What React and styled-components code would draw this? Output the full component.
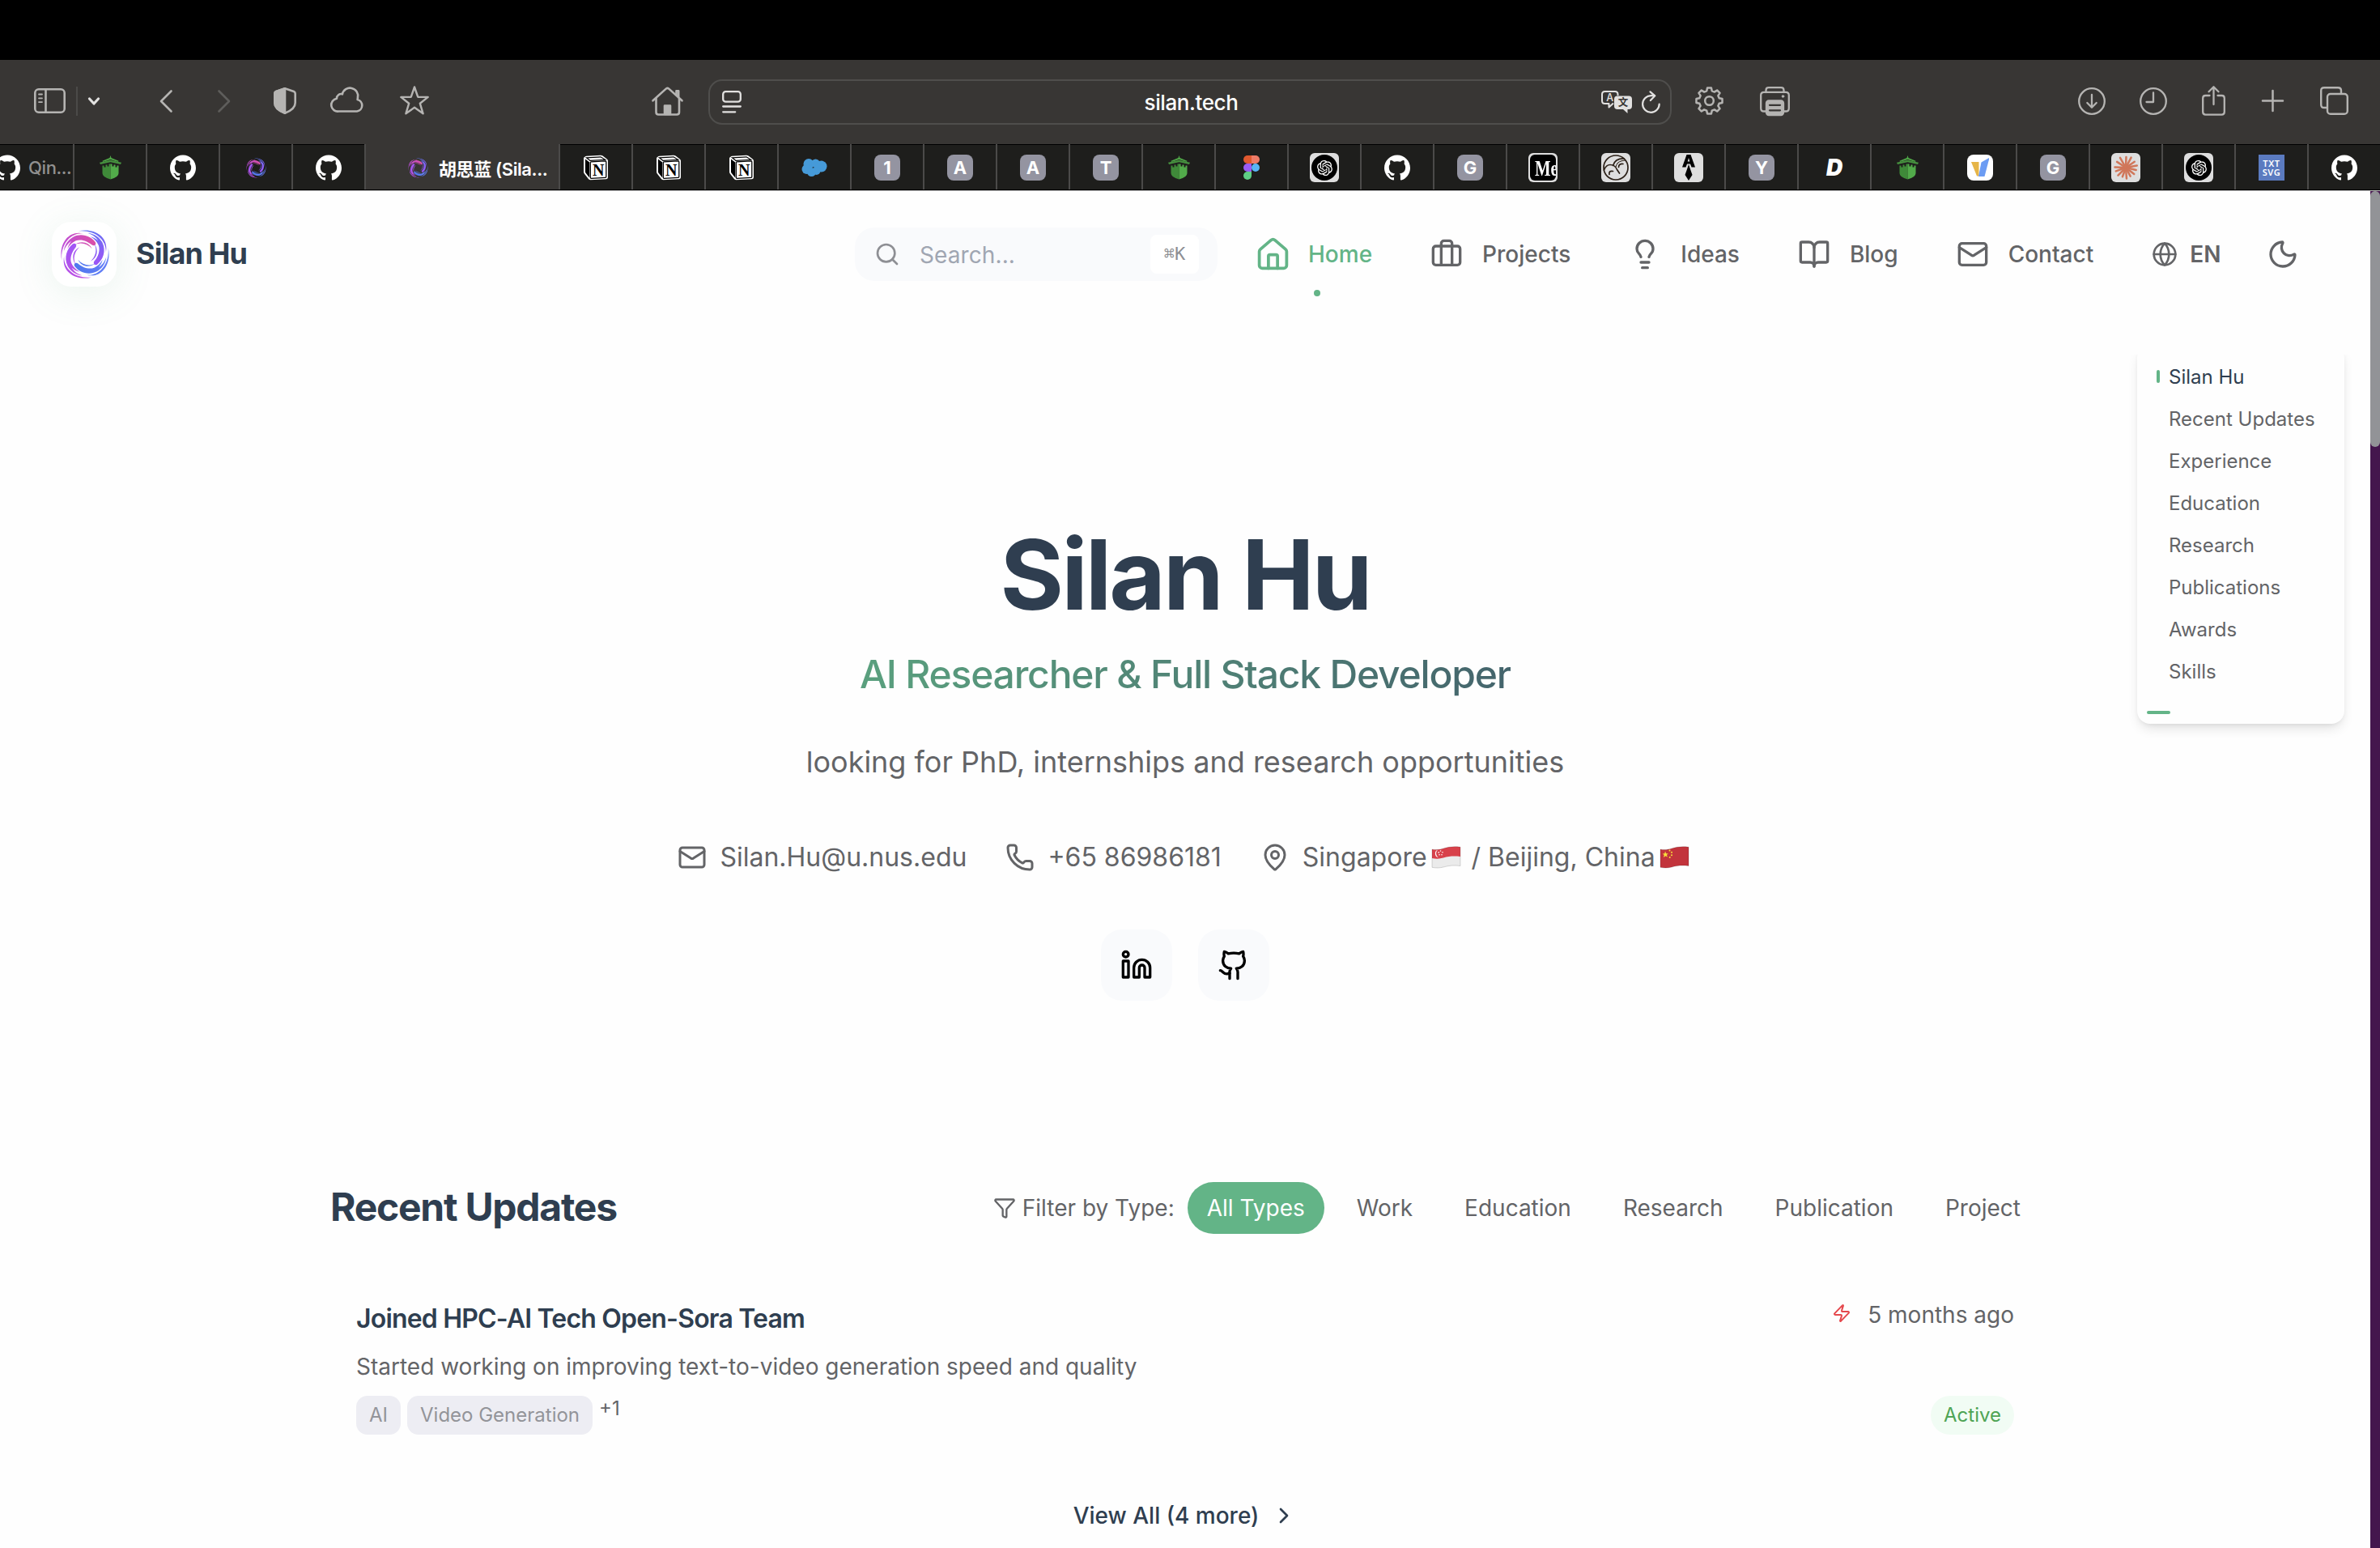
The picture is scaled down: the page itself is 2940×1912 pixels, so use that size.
import React from "react";
import styled, { createGlobalStyle, css } from "styled-components";
import {
  House, Briefcase, Lightbulb, BookOpen, Mail, Globe, Moon, Search,
  Phone, MapPin, Linkedin, Github, Funnel, Zap, ChevronRight,
} from "lucide-react";
import { SiGithub } from "react-icons/si";
import { RiOpenaiFill } from "react-icons/ri";

const ink = "#2f3e50";
const muted = "#636467";
const green = "#63b487";
const chrome = "#383634";
const glyph = "#b5b4b2";

const GlobalStyle = createGlobalStyle`
  *, *::before, *::after { box-sizing: border-box; }
  body {
    margin: 0;
    background: #000;
    font-family: Inter, "Noto Sans CJK SC", sans-serif;
    overflow: hidden;
  }
  h1, h2, h3, p { margin: 0; }
  svg { display: block; flex: none; }
`;

const Screen = styled.div`
  width: 2940px;
  height: 1912px;
  display: flex;
  flex-direction: column;
  padding-top: 74px;
  overflow: hidden;
`;

/* ---------- browser chrome ---------- */

const Toolbar = styled.div`
  height: 104px;
  flex: none;
  display: flex;
  align-items: center;
  background: ${chrome};
  padding: 0 39px 3px 42px;
`;

const ToolButton = styled.div`
  flex: none;
  display: flex;
  align-items: center;
  height: 44px;
  padding-bottom: ${(p) => p.$lift || 0}px;
  margin-left: ${(p) => p.$gap || 0}px;
  color: ${(p) => p.$color || glyph};
`;

const ToolDivider = styled.div`
  width: 2px;
  height: 36px;
  margin-left: 13px;
  background: #4b4a48;
`;

const Spacer = styled.div`
  flex: 1;
`;

const UrlBar = styled.div`
  width: 1190px;
  height: 56px;
  margin-top: 3px;
  margin-left: 31px;
  padding: 0 12px 0 15px;
  border: 2px solid #4f4e4c;
  border-radius: 17px;
  display: flex;
  align-items: center;
  justify-content: space-between;
  color: #e2e1e0;
`;

const UrlSide = styled.div`
  width: 80px;
  display: flex;
  align-items: center;
  gap: 12px;
  justify-content: ${(p) => (p.$end ? "flex-end" : "flex-start")};
`;

const UrlText = styled.div`
  padding-top: 1px;
  font-size: 26px;
  font-weight: 500;
  letter-spacing: -0.4px;
  color: #fff;
`;

const TabStrip = styled.div`
  height: 58px;
  flex: none;
  display: flex;
  background: #1e1e1c;
  border-bottom: 1px solid #b9b9b9;
  box-shadow: inset 0 -1px 0 #000;
`;

const Tab = styled.div`
  flex: none;
  width: ${(p) => p.$width || 90}px;
  height: 56px;
  display: flex;
  align-items: center;
  justify-content: ${(p) => (p.$start ? "flex-start" : "center")};
  padding-top: 2px;
  padding-left: ${(p) => p.$start || 0}px;
  gap: ${(p) => p.$gap || 0}px;
  border-right: 2px solid #4b4a49;
  overflow: hidden;
  white-space: nowrap;
  ${(p) =>
    p.$active
      ? css`background: ${chrome};`
      : css`box-shadow: inset 0 1px 0 #000;`}
`;

const TabTitle = styled.span`
  font-size: 22px;
  font-weight: ${(p) => (p.$active ? 600 : 500)};
  letter-spacing: -0.4px;
  color: ${(p) => (p.$active ? "#fff" : "#91908f")};
`;

const LetterIcon = styled.div`
  width: 32px;
  height: 32px;
  border-radius: 8px;
  background: #9494a1;
  color: #fff;
  font-size: 22px;
  font-weight: 700;
  line-height: 33px;
  text-align: center;
`;

const PlateIcon = styled.div`
  width: 36px;
  height: 36px;
  border-radius: 6px;
  background: #dedede;
  display: flex;
  align-items: center;
  justify-content: center;
`;

const Disc = styled.div`
  width: 32px;
  height: 32px;
  border-radius: 16px;
  background: #000;
  color: #fff;
  display: flex;
  align-items: center;
  justify-content: center;
`;

const SerifPlate = styled.div`
  width: 32px;
  height: 32px;
  border-radius: 6px;
  background: #000;
  color: #fff;
  overflow: hidden;
  padding-left: 6px;
  font: 700 28px/33px "Liberation Serif", serif;

  span {
    display: block;
    transform: scaleX(0.74);
    transform-origin: left center;
  }
`;

const SlantLetter = styled.div`
  color: #fff;
  font-size: 28px;
  font-weight: 900;
  font-style: italic;
`;

const TxtTile = styled.div`
  width: 32px;
  height: 32px;
  background: #5b7bc0;
  color: #fff;
  padding-top: 5px;
  font: 600 11px/11px "Noto Sans", sans-serif;
  letter-spacing: 0.6px;
  text-align: center;
`;

/* ---------- page ---------- */

const Viewport = styled.div`
  flex: 1;
  min-height: 0;
  display: flex;
  background: #fefefe;
`;

const Page = styled.div`
  flex: 1;
  min-width: 0;
  position: relative;
  display: flex;
  flex-direction: column;
`;

const ScrollTrack = styled.div`
  width: 12px;
  background: #44164d;
`;

const ScrollThumb = styled.div`
  height: 316px;
  border-radius: 6px;
  background: #929397;
`;

const Header = styled.header`
  height: 156px;
  flex: none;
  display: flex;
  align-items: center;
  padding-left: 64px;
`;

const LogoBox = styled.div`
  width: 80px;
  height: 80px;
  border-radius: 24px;
  background: #fff;
  display: flex;
  align-items: center;
  justify-content: center;
  padding-left: 1px;
  box-shadow: 0 8px 48px rgba(99, 180, 135, 0.13);
`;

const Brand = styled.div`
  width: 890px;
  padding-left: 24px;
  padding-bottom: 2px;
  font-size: 36px;
  font-weight: 700;
  letter-spacing: -0.9px;
  color: ${ink};
`;

const SearchBox = styled.div`
  width: 448px;
  height: 66px;
  margin-left: 22px;
  padding: 0 23px 0 24px;
  border-radius: 24px;
  background: #f9fafc;
  display: flex;
  align-items: center;
  color: #8e8f94;
`;

const Placeholder = styled.span`
  flex: 1;
  padding-top: 1px;
  padding-left: 24px;
  font-size: 28px;
  letter-spacing: 0.1px;
  color: #a0a6b2;
`;

const Kbd = styled.span`
  width: 60px;
  height: 48px;
  border-radius: 8px;
  background: #fff;
  display: flex;
  align-items: center;
  justify-content: center;
  font: 22px/48px "DejaVu Sans Mono", "DejaVu Sans", monospace;
  color: #8e8f94;
`;

const NavItem = styled.a`
  position: relative;
  flex: none;
  display: flex;
  align-items: center;
  gap: ${(p) => p.$iconGap ?? 24}px;
  margin-left: ${(p) => p.$gap ?? 72}px;
  font-size: 28px;
  font-weight: ${(p) => p.$weight || 500};
  color: ${(p) => (p.$active ? green : muted)};
`;

const NavIcon = styled.span`
  width: 40px;
  display: flex;
  justify-content: center;
`;

const ActiveDot = styled.span`
  position: absolute;
  left: 71px;
  top: 66px;
  width: 8px;
  height: 8px;
  border-radius: 4px;
  background: ${green};
`;

const Hero = styled.section`
  display: flex;
  flex-direction: column;
  align-items: center;
  padding-top: 246px;
`;

const Name = styled.h1`
  font-size: 120px;
  line-height: 144px;
  font-weight: 700;
  letter-spacing: -3px;
  color: ${ink};
`;

const Role = styled.h2`
  margin-top: 21px;
  font-size: 48px;
  line-height: 60px;
  font-weight: 500;
  letter-spacing: -1.2px;
  background: linear-gradient(90deg, #5aa07e, #538a78 40%, #44646c);
  background-clip: text;
  -webkit-background-clip: text;
  color: transparent;
`;

const Tagline = styled.p`
  margin-top: 48px;
  font-size: 36px;
  line-height: 60px;
  color: ${muted};
`;

const ContactRow = styled.div`
  margin-top: 64px;
  height: 48px;
  display: flex;
  align-items: center;
  gap: 48px;
`;

const ContactItem = styled.div`
  display: flex;
  align-items: center;
  gap: 16px;
  font-size: 32px;
  line-height: 48px;
  color: ${muted};
  white-space: pre;
`;

const ContactText = styled.span`
  display: flex;
  align-items: center;

  svg {
    margin: 0 4px 0 5px;
  }
`;

const SocialRow = styled.div`
  margin-top: 65px;
  display: flex;
  gap: 32px;
`;

const SocialButton = styled.a`
  width: 88px;
  height: 88px;
  border-radius: 26px;
  background: #f9fafc;
  color: #000;
  display: flex;
  align-items: center;
  justify-content: center;
`;

const Updates = styled.section`
  width: 2112px;
  margin: 224px auto 0;
`;

const UpdatesHead = styled.div`
  height: 64px;
  display: flex;
  align-items: center;
  gap: 16px;
`;

const SectionTitle = styled.h2`
  flex: 1;
  padding-bottom: 2px;
  font-size: 48px;
  line-height: 60px;
  font-weight: 700;
  letter-spacing: -1.25px;
  color: ${ink};
`;

const FilterLabel = styled.div`
  display: flex;
  align-items: center;
  gap: 8px;
  font-size: 28px;
  color: ${muted};
`;

const Pill = styled.button`
  height: 64px;
  padding: 0 24px;
  border: 0;
  border-radius: 32px;
  font: 400 28px/64px Inter, sans-serif;
  background: ${(p) => (p.$active ? green : "transparent")};
  color: ${(p) => (p.$active ? "#fff" : muted)};
`;

const Card = styled.article`
  margin-top: 82px;
  padding: 0 32px;
  display: flex;
  justify-content: space-between;
`;

const CardMain = styled.div`
  display: flex;
  flex-direction: column;
`;

const CardTitle = styled.h3`
  margin-top: 1px;
  font-size: 32px;
  line-height: 44px;
  font-weight: 600;
  letter-spacing: -0.82px;
  color: ${ink};
`;

const CardText = styled.p`
  margin-top: 15px;
  font-size: 28px;
  line-height: 44px;
  color: ${muted};
`;

const Tags = styled.div`
  margin-top: 14px;
  display: flex;
  gap: 8px;
`;

const Tag = styled.span`
  height: 48px;
  padding: 0 16px;
  border-radius: 14px;
  background: #ededf3;
  font-size: 24px;
  line-height: 48px;
  color: #939499;
`;

const MoreTags = styled.span`
  font-size: 24px;
  line-height: 32px;
  color: ${muted};
`;

const CardSide = styled.div`
  display: flex;
  flex-direction: column;
  align-items: flex-end;
  justify-content: space-between;
`;

const When = styled.div`
  display: flex;
  align-items: center;
  gap: 20px;
  height: 36px;
  font-size: 28px;
  color: ${muted};

  svg {
    margin-bottom: 4px;
  }
`;

const Status = styled.span`
  height: 48px;
  padding: 0 16px;
  border-radius: 24px;
  background: #f1fcf4;
  font-size: 24px;
  line-height: 48px;
  color: #4fa455;
`;

const ViewAll = styled.div`
  margin-top: 78px;
  height: 44px;
  display: flex;
  align-items: center;
  justify-content: center;
  gap: 15px;
  font-size: 28px;
  font-weight: 500;
  color: ${ink};
`;

const Toc = styled.nav`
  position: absolute;
  left: 2640px;
  top: 190px;
  width: 256px;
  height: 468px;
  padding: 13px 12px 0;
  border-radius: 16px;
  background: #fefefe;
  box-shadow: 0 8px 16px -4px rgba(0, 0, 0, 0.14), 0 2px 6px -2px rgba(0, 0, 0, 0.08);
  clip-path: inset(12px -30px -40px -30px);
  display: flex;
  flex-direction: column;
`;

const TocItem = styled.a`
  height: 52px;
  display: flex;
  align-items: center;
  padding-left: 12px;
  gap: 11px;
  font-size: 24px;
  white-space: nowrap;
  color: ${(p) => (p.$active ? ink : muted)};

  &::before {
    content: "";
    flex: none;
    width: 4px;
    height: 16px;
    border-radius: 2px;
    background: ${(p) => (p.$active ? green : "transparent")};
  }
`;

const TocProgress = styled.div`
  width: 29px;
  height: 4px;
  margin-top: 23px;
  border-radius: 2px;
  background: ${green};
`;

/* ---------- drawings ---------- */

const Line = ({ w, h, sw = 2.6, children }) => (
  <svg width={w} height={h} viewBox={`0 0 ${w} ${h}`} fill="none" stroke="currentColor"
    strokeWidth={sw} strokeLinecap="round" strokeLinejoin="round" overflow="visible">
    {children}
  </svg>
);

const SidebarIcon = () => (
  <Line w={39} h={31}>
    <rect x="1.3" y="1.3" width="36.4" height="28.4" rx="4.5" />
    <path d="M14.5 1.5v28" />
    <path d="M6 7.5h4M6 12.3h4M6 17.1h4" strokeWidth="1.8" />
  </Line>
);

const ShieldIcon = () => (
  <Line w={28} h={33}>
    <path d="M14 1.3 25 5q1.7.7 1.7 2.6V19q0 8-12.7 12.7Q1.3 27 1.3 19V7.6Q1.3 5.7 3 5Z" />
    <path d="M14 1.3V31.7Q1.3 27 1.3 19V7.6Q1.3 5.7 3 5Z" fill="currentColor" />
  </Line>
);

const CloudIcon = () => (
  <Line w={41} h={30}>
    <path d="M9.5 28.5a8 8 0 0 1-2.6-15.8 5.500 5.500 0 0 1 7-5.400 9.600 9.600 0 0 1 19 4.200c0 1-.1 1.700-.3 2.500a7.400 7.400 0 0 1-.6 14.500Z" />
  </Line>
);

const StarIcon = () => (
  <Line w={36} h={36} sw={2.4}>
    <path d="M18 1.5 22.2 13.7 34.7 13.9 24.8 21.7 28.6 34.3 18 26.8 7.4 34.3 11.2 21.7 1.3 13.9 13.8 13.7Z" />
  </Line>
);

const HomeIcon = () => (
  <Line w={39} h={36}>
    <path d="M1.500 17.300 18 2.400q1.500-1.200 3 0L37.500 17.300" />
    <path d="M5.500 14.500V31.500q0 3 3 3H31q3 0 3-3V14.500" />
    <path d="M30.500 10V5.200h2.700V12.500" />
    <path d="M16 34V23.500h7V34Z" fill="currentColor" />
  </Line>
);

const ReaderIcon = () => (
  <Line w={24} h={28} sw={2.3}>
    <rect x="1.2" y="1.2" width="21.6" height="12.5" rx="3.2" />
    <path d="M1.200 19.500h21.600M1.200 26.300h15" />
  </Line>
);

const TranslateIcon = () => (
  <svg width="38" height="28" viewBox="0 0 38 28" overflow="visible">
    <path d="M15 15.500 9.500 20.500V16H4.500q-3.500 0-3.500-3.500v-8Q1 1 4.500 1h12.500Q20.500 1 20.500 4.500V6" fill="none" stroke="#e2e1e0" strokeWidth="2" strokeLinejoin="round" />
    <path d="M20 6.500h14q4 0 4 4v8.500q0 4-4 4h-1.500v5L27 23h-7q-4 0-4-4v-8.500q0-4 4-4Z" fill="#e2e1e0" />
    <text x="10.7" y="13" fontSize="12.5" fontWeight="500" textAnchor="middle" fill="#e2e1e0" fontFamily="Inter, sans-serif">A</text>
    <text x="27" y="19.3" fontSize="12.5" fontWeight="700" textAnchor="middle" fill="#383634" fontFamily="Noto Sans CJK SC, sans-serif">文</text>
  </svg>
);

const ReloadIcon = () => (
  <Line w={23} h={28} sw={2.2}>
    <path d="M21.700 16.500A10.300 10.300 0 1 1 11.400 6.200H16" />
    <path d="M10.500 1.300 16.300 6.300 10.800 12" />
  </Line>
);

const gearPath = (() => {
  const pts = [];
  for (let i = 0; i < 8; i++) {
    const a = (i * Math.PI) / 4;
    [[-0.26, 12.6], [-0.15, 16.2], [0.15, 16.2], [0.26, 12.6]].forEach(([d, r]) =>
      pts.push(`${(17.5 + r * Math.sin(a + d)).toFixed(2)} ${(17.5 - r * Math.cos(a + d)).toFixed(2)}`)
    );
  }
  return `M${pts.join("L")}Z`;
})();

const GearIcon = () => (
  <Line w={35} h={35} sw={2.5}>
    <path d={gearPath} />
    <circle cx="17.5" cy="17.5" r="5.3" />
  </Line>
);

const PrinterIcon = () => (
  <Line w={37} h={36} sw={2.3}>
    <path d="M7.500 7V4.500Q7.500 1.200 10.800 1.200h15.400q3.300 0 3.300 3.300V7" />
    <path d="M7 30.500H5q-3.800 0-3.800-3.800V10.500Q1.200 6.800 5 6.800h27q3.800 0 3.800 3.700v16.200q0 3.800-3.800 3.800h-2" />
    <circle cx="28.5" cy="12" r="1.3" fill="currentColor" strokeWidth="1" />
    <rect x="8" y="17.5" width="21" height="17.5" rx="3" fill="currentColor" />
    <path d="M12 22.800h13M12 29.300h13" stroke="#383634" />
  </Line>
);

const DownloadIcon = () => (
  <Line w={34} h={34} sw={2.3}>
    <circle cx="17" cy="17" r="15.8" />
    <path d="M17 9v15.500M11.300 19 17 24.800 22.700 19" />
  </Line>
);

const ClockIcon = () => (
  <Line w={34} h={34} sw={2.3}>
    <circle cx="17" cy="17" r="15.8" />
    <path d="M17 6.500V18H8.500" />
  </Line>
);

const ShareIcon = () => (
  <Line w={29} h={37} sw={2.3}>
    <path d="M9.500 12H4.500q-3.300 0-3.300 3.300v17q0 3.300 3.300 3.300h20q3.300 0 3.300-3.300v-17q0-3.300-3.300-3.300h-5" />
    <path d="M14.500 23V1.500M8.500 7.300 14.500 1.300 20.500 7.300" />
  </Line>
);

const PlusIcon = () => (
  <Line w={27} h={27} sw={2.5}>
    <path d="M13.500 1v25M1 13.500h25" />
  </Line>
);

const TabsIcon = () => (
  <Line w={35} h={35} sw={2.4}>
    <path d="M8.800 26H5q-3.800 0-3.800-3.800V5Q1.200 1.200 5 1.200h17.200Q26 1.200 26 5v3.500" />
    <rect x="9" y="9" width="24.8" height="24.8" rx="3.8" />
  </Line>
);

const armBody = "M38 -45C22 -66 -12 -80 -44 -64C-62 -54 -76 -36 -79 -10C-72 -30 -62 -42 -50 -49C-58 -40 -63 -30 -65 -20C-56 -36 -46 -44 -34 -50C-14 -58 10 -48 25 -35C34 -28 44 -36 38 -45Z";
const armOuter = "M-6 -77C-50 -82 -92 -40 -86 24C-99 -38 -62 -90 -6 -77Z";
const armInner = "M26 -20C8 -40 -16 -46 -40 -34C-16 -52 14 -46 26 -20Z";

const Swirl = ({ size, id }) => (
  <svg width={size} height={size} viewBox="-93 -93 186 186">
    <defs>
      {[["a", "#b94fe0", "#dc4fa6"], ["b", "#5f74f3", "#9d55f6"], ["c", "#6a80f8", "#4f78ee"], ["d", "#c04fe0", "#9f57f7"]].map(([k, s, e]) => (
        <linearGradient key={k} id={id + k} x1="-90" y1="0" x2="40" y2="-40" gradientUnits="userSpaceOnUse">
          <stop offset="0" stopColor={s} />
          <stop offset="1" stopColor={e} />
        </linearGradient>
      ))}
    </defs>
    {["a", "b", "c", "d"].map((k, i) => (
      <g key={k} fill={`url(#${id}${k})`} transform={`rotate(${i * 90})`}>
        <path d={armBody} />
        <path d={armOuter} />
        <path d={armInner} />
      </g>
    ))}
  </svg>
);

const CastleIcon = () => (
  <svg width="27" height="30" viewBox="0 0 27 30">
    <path d="M13.5 0 14.500 3 23.500 6.800 23 8 13.500 5 4 8 3.500 6.800 12.500 3Z" fill="#4fa647" />
    <path d="M13.500 5.800 27 8.800 26 11 13.500 8.200 1 11 0 8.800Z" fill="#458f3e" />
    <path d="M3.500 12.500h2v2h2v-3h2v2h2V10.500h2V29.500Q3.500 27 3.500 22Z" fill="#3f8a39" />
    <path d="M23.500 12.500h-2v2h-2v-3h-2v2h-2V10.500h-2V29.500Q23.500 27 23.500 22Z" fill="#52ab4a" />
  </svg>
);

const NotionIcon = () => (
  <svg width="32" height="32" viewBox="0 0 32 32">
    <path d="M2.500 2.800Q3 1.800 4.500 1.700L22 .8q1.500 0 2.600.8l5.200 3.800q1.200.8 1.200 2.300V28q0 2-2 2.200L9.500 31.300q-1.600 0-2.600-1.200L1.800 23.500Q1 22.500 1 21V4.500q0-1 1.500-1.700Z" fill="#fff" />
    <path d="M3 5.500 8.200 9.500V28.500L3.600 22.800Q3 22 3 21Z" fill="#000" />
    <path d="M4.500 3.800 22 2.800 27.500 6.300 9 7.400Z" fill="#fff" stroke="#000" strokeWidth="1.3" />
    <path d="M9.300 9.800Q9.300 9 10.200 8.900L27.800 7.800q1 0 1 1V27.300q0 1-1 1L10.400 29.300q-1.100 0-1.100-1.100Z" fill="#fff" stroke="#000" strokeWidth="1.3" />
    <text x="19.2" y="26" fontSize="20" fontWeight="700" textAnchor="middle" fontFamily="Liberation Serif, serif" fill="#000">N</text>
  </svg>
);

const CloudFavicon = () => (
  <svg width="32" height="24" viewBox="0 0 32 24" fill="#469ad8">
    <circle cx="9" cy="7.5" r="6.5" />
    <circle cx="17.5" cy="6.8" r="5.3" />
    <circle cx="24.5" cy="10.5" r="7" />
    <circle cx="6.5" cy="14" r="6" />
    <circle cx="12.5" cy="17.5" r="5.5" />
    <circle cx="18.5" cy="16" r="5" />
  </svg>
);

const FigmaIcon = () => (
  <svg width="20" height="30" viewBox="0 0 20 30">
    <path d="M5 0h5v10H5A5 5 0 0 1 5 0Z" fill="#e0592f" />
    <path d="M10 0h5a5 5 0 0 1 0 10h-5Z" fill="#ee7b67" />
    <path d="M5 10h5v10H5A5 5 0 0 1 5 10Z" fill="#9a5cf5" />
    <circle cx="15" cy="15" r="5" fill="#57b5f5" />
    <path d="M5 20h5v5a5 5 0 1 1-5-5Z" fill="#5fce86" />
  </svg>
);

const BirdIcon = () => (
  <svg width="32" height="32" viewBox="0 0 32 32" fill="none" stroke="#2b2017" strokeWidth="1.7" strokeLinecap="round">
    <circle cx="16" cy="16" r="15" />
    <path d="M1.500 19Q4 12.500 9 12.500 15 12.500 17.500 18.500L20.500 23" />
    <path d="M12.500 13.500Q15 4.500 26 4.800" />
    <path d="M16 15Q17.500 7.500 27.500 7" strokeWidth="1.2" />
    <path d="M8 24.500Q7 19.500 12.500 20.500M19.500 15.500Q19.500 11 25 11.500" />
  </svg>
);

const NibIcon = () => (
  <svg width="20" height="34" viewBox="0 0 20 34">
    <path d="M7.500 1h5L18 16.500h-4.500L12 12.500H8L6.500 16.500H2ZM10 5 8.700 9.500h2.600Z" fill="#000" fillRule="evenodd" />
    <path d="M10 13 12 19 14.500 26 10 33 5.500 26 8 19Z" fill="#000" />
  </svg>
);

const PencilTile = () => (
  <svg width="32" height="32" viewBox="0 0 32 32">
    <rect width="32" height="32" rx="8" fill="#fff" />
    <path d="M5 9h9.500v17.500H12Z" fill="#e6b548" />
    <path d="M17.500 9.500 27 4v2L21.500 27H14Z" fill="#6c9cf3" />
  </svg>
);

const BurstIcon = () => (
  <svg width="32" height="32" viewBox="-16 -16 32 32" stroke="#d0775a" strokeWidth="2.5" strokeLinecap="round">
    {[[2, 13], [28, 14], [56, 13], [80, 14], [103, 13], [128, 13], [152, 12], [176, 13.5], [200, 12], [225, 13.5], [250, 13], [272, 13.5], [303, 13], [330, 14]].map(([a, r]) => (
      <path key={a} d={`M0 0L${r * Math.sin((a * Math.PI) / 180)} ${-r * Math.cos((a * Math.PI) / 180)}`} />
    ))}
  </svg>
);

const flagShape = "M1 4C6 5 10 4.500 15 3 22 .8 28 .2 36 1.200V24.500C28 23.500 22 24 15 26 10 27.200 6 27.300 1 26.300Z";

const SingaporeFlag = () => (
  <svg width="37" height="28" viewBox="0 0 37 28">
    <path d={flagShape} fill="#ebebeb" />
    <path d="M1 4C6 5 10 4.500 15 3 22 .8 28 .2 36 1.200V13C28 12 22 12.500 15 14.500 10 15.800 6 16 1 15Z" fill="#d8414a" />
    <path d="M8 4.800a4.800 4.800 0 0 0 .7 9.200A5.800 5.800 0 0 1 8 4.800Z" fill="#fff" />
    {[[11.5, 6], [14, 7.8], [13, 10.7], [10, 10.7], [9.2, 7.9]].map(([x, y]) => (
      <circle key={x} cx={x} cy={y} r=".8" fill="#fff" />
    ))}
    <path d={flagShape} fill="none" stroke="#000" strokeOpacity=".15" />
  </svg>
);

const ChinaFlag = () => (
  <svg width="37" height="28" viewBox="0 0 37 28">
    <path d={flagShape} fill="#c2343c" />
    <path d="M7 6.500 8.200 9.300 10.700 9.200 8.900 11 9.900 13.500 7.400 12.200 5 13.900 5.700 11.100 3.800 9.400 6.300 9.200Z" fill="#f8e13b" />
    {[[12.5, 5.5], [15, 7.8], [15, 11.2], [12.7, 14]].map(([x, y]) => (
      <circle key={y} cx={x} cy={y} r="1" fill="#f8e13b" />
    ))}
    <path d={flagShape} fill="none" stroke="#000" strokeOpacity=".15" />
  </svg>
);

/* ---------- data ---------- */

const OctoTab = () => <SiGithub size={32} color="#fff" />;
const KnotTab = () => (
  <PlateIcon><Disc><RiOpenaiFill size={23} /></Disc></PlateIcon>
);
const letter = (c) => () => <LetterIcon>{c}</LetterIcon>;

const leftTabs = [CastleIcon, OctoTab, () => <Swirl size={25} id="t" />, OctoTab];
const rightTabs = [
  NotionIcon, NotionIcon, NotionIcon, CloudFavicon,
  letter("1"), letter("A"), letter("A"), letter("T"),
  CastleIcon, FigmaIcon, KnotTab, OctoTab, letter("G"),
  () => <PlateIcon><SerifPlate><span>Me</span></SerifPlate></PlateIcon>,
  () => <PlateIcon><BirdIcon /></PlateIcon>,
  () => <PlateIcon><NibIcon /></PlateIcon>,
  letter("Y"),
  () => <SlantLetter>D</SlantLetter>,
  CastleIcon, PencilTile, letter("G"),
  () => <PlateIcon><BurstIcon /></PlateIcon>,
  KnotTab,
  () => <TxtTile>TXT<br />SVG</TxtTile>,
  OctoTab,
];

const nav = [
  { label: "Projects", icon: Briefcase },
  { label: "Ideas", icon: Lightbulb },
  { label: "Blog", icon: BookOpen },
  { label: "Contact", icon: Mail },
];

const sections = ["Silan Hu", "Recent Updates", "Experience", "Education", "Research", "Publications", "Awards", "Skills"];
const filters = ["All Types", "Work", "Education", "Research", "Publication", "Project"];

export default function App() {
  return (
    <Screen>
      <GlobalStyle />
      <Toolbar>
        <ToolButton><SidebarIcon /></ToolButton>
        <ToolDivider />
        <ToolButton $gap={13} $color="#e2e1e0">
          <Line w={14} h={8} sw={3.2}><path d="M1.5 1 7 7 12.5 1" /></Line>
        </ToolButton>
        <ToolButton $gap={74}>
          <Line w={16} h={28}><path d="M14.500 1.500 2 14 14.500 26.500" /></Line>
        </ToolButton>
        <ToolButton $gap={56} $color="#5e5d5b">
          <Line w={16} h={28}><path d="M1.500 1.500 14 14 1.500 26.500" /></Line>
        </ToolButton>
        <ToolButton $gap={53}><ShieldIcon /></ToolButton>
        <ToolButton $gap={43} $lift={2}><CloudIcon /></ToolButton>
        <ToolButton $gap={44} $lift={2}><StarIcon /></ToolButton>
        <ToolButton $gap={275}><HomeIcon /></ToolButton>
        <UrlBar>
          <UrlSide><ReaderIcon /></UrlSide>
          <UrlText>silan.tech</UrlText>
          <UrlSide $end><TranslateIcon /><ReloadIcon /></UrlSide>
        </UrlBar>
        <ToolButton $gap={29}><GearIcon /></ToolButton>
        <ToolButton $gap={45}><PrinterIcon /></ToolButton>
        <Spacer />
        <ToolButton><DownloadIcon /></ToolButton>
        <ToolButton $gap={42}><ClockIcon /></ToolButton>
        <ToolButton $gap={43}><ShareIcon /></ToolButton>
        <ToolButton $gap={45}><PlusIcon /></ToolButton>
        <ToolButton $gap={45}><TabsIcon /></ToolButton>
      </Toolbar>

      <TabStrip>
        <Tab $width={92} $start={0.01} $gap={10}>
          <svg width="25" height="32" viewBox="7 0 25 32">
            <SiGithub size={32} color="#fff" />
          </svg>
          <TabTitle>Qin...</TabTitle>
        </Tab>
        {leftTabs.map((Icon, i) => <Tab key={i}><Icon /></Tab>)}
        <Tab $active $width={240} $start={52} $gap={13}>
          <Swirl size={25} id="u" />
          <TabTitle $active>胡思蓝 (Sila...</TabTitle>
        </Tab>
        {rightTabs.map((Icon, i) => <Tab key={i}><Icon /></Tab>)}
      </TabStrip>

      <Viewport>
        <Page>
          <Header>
            <LogoBox><Swirl size={62} id="l" /></LogoBox>
            <Brand>Silan Hu</Brand>
            <SearchBox>
              <Search size={32} />
              <Placeholder>Search...</Placeholder>
              <Kbd>⌘K</Kbd>
            </SearchBox>
            <NavItem $active $gap={48}>
              <NavIcon><House size={45} /></NavIcon>
              Home
              <ActiveDot />
            </NavItem>
            {nav.map(({ label, icon: Icon }) => (
              <NavItem key={label}>
                <NavIcon><Icon size={40} /></NavIcon>
                {label}
              </NavItem>
            ))}
            <NavItem $iconGap={15} $weight={600}>
              <Globe size={32} />
              EN
            </NavItem>
            <NavItem $gap={57}><Moon size={40} /></NavItem>
          </Header>

          <Hero>
            <Name>Silan Hu</Name>
            <Role>AI Researcher &amp; Full Stack Developer</Role>
            <Tagline>looking for PhD, internships and research opportunities</Tagline>
            <ContactRow>
              <ContactItem><Mail size={36} />Silan.Hu@u.nus.edu</ContactItem>
              <ContactItem><Phone size={36} />+65 86986181</ContactItem>
              <ContactItem>
                <MapPin size={36} />
                <ContactText>
                  Singapore<SingaporeFlag />{" / Beijing, China"}<ChinaFlag />
                </ContactText>
              </ContactItem>
            </ContactRow>
            <SocialRow>
              <SocialButton><Linkedin size={40} /></SocialButton>
              <SocialButton><Github size={40} /></SocialButton>
            </SocialRow>
          </Hero>

          <Updates>
            <UpdatesHead>
              <SectionTitle>Recent Updates</SectionTitle>
              <FilterLabel><Funnel size={28} />Filter by Type:</FilterLabel>
              {filters.map((f, i) => <Pill key={f} $active={i === 0}>{f}</Pill>)}
            </UpdatesHead>
            <Card>
              <CardMain>
                <CardTitle>Joined HPC-AI Tech Open-Sora Team</CardTitle>
                <CardText>Started working on improving text-to-video generation speed and quality</CardText>
                <Tags>
                  <Tag>AI</Tag>
                  <Tag>Video Generation</Tag>
                  <MoreTags>+1</MoreTags>
                </Tags>
              </CardMain>
              <CardSide>
                <When><Zap size={24} color="#e5484d" />5 months ago</When>
                <Status>Active</Status>
              </CardSide>
            </Card>
            <ViewAll>View All (4 more)<ChevronRight size={32} /></ViewAll>
          </Updates>

          <Toc>
            {sections.map((s, i) => <TocItem key={s} $active={i === 0}>{s}</TocItem>)}
            <TocProgress />
          </Toc>
        </Page>
        <ScrollTrack><ScrollThumb /></ScrollTrack>
      </Viewport>
    </Screen>
  );
}
